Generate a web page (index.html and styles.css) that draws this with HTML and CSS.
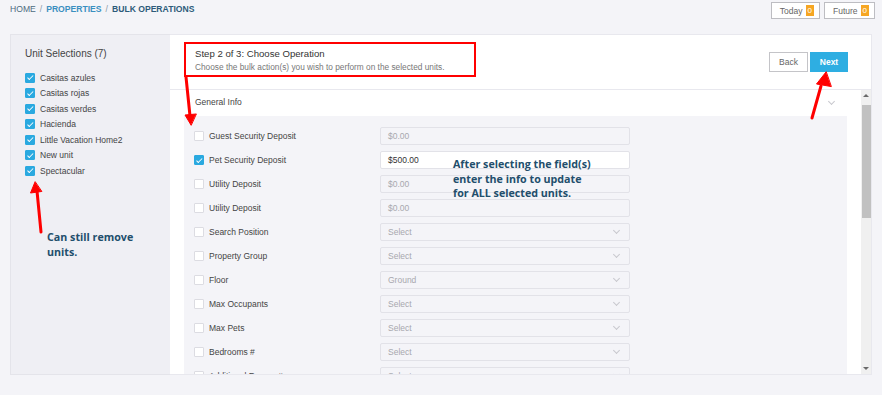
FILE: index.html
```html
<!DOCTYPE html>
<html lang="en">
<head>
    <meta charset="UTF-8">
    <meta name="viewport" content="width=device-width, initial-scale=1.0">
    <title>Bulk Operations</title>
    <link rel="stylesheet" href="styles.css">
</head>
<body>
<div class="page">
    <div class="topbar">
        <div class="crumbs">
            <span class="home">HOME</span>
            <span class="sep">/</span>
            <span class="link">PROPERTIES</span>
            <span class="sep">/</span>
            <span class="current">BULK OPERATIONS</span>
        </div>
        <div class="counters">
            <button class="counter">Today <span class="badge">0</span></button>
            <button class="counter">Future <span class="badge">0</span></button>
        </div>
    </div>

    <div class="layout">
        <aside class="units">
            <h3>Unit Selections (7)</h3>
            <ul>
                <li><span class="cb on"></span>Casitas azules</li>
                <li><span class="cb on"></span>Casitas rojas</li>
                <li><span class="cb on"></span>Casitas verdes</li>
                <li><span class="cb on"></span>Hacienda</li>
                <li><span class="cb on"></span>Little Vacation Home2</li>
                <li><span class="cb on"></span>New unit</li>
                <li><span class="cb on"></span>Spectacular</li>
            </ul>
        </aside>

        <section class="main">
            <div class="main-head">
                <div class="step">
                    <h2>Step 2 of 3: Choose Operation</h2>
                    <p>Choose the bulk action(s) you wish to perform on the selected units.</p>
                </div>
                <div class="actions">
                    <button class="btn">Back</button>
                    <button class="btn primary">Next</button>
                </div>
            </div>

            <div class="body-wrap">
                <div class="scroll">
                    <div class="section">
                        <div class="section-head">
                            <span>General Info</span>
                            <span class="caret"></span>
                        </div>
                        <div class="fields">
                            <div class="row"><span class="cb"></span><label>Guest Security Deposit</label><div class="input">$0.00</div></div>
                            <div class="row"><span class="cb on"></span><label>Pet Security Deposit</label><div class="input active">$500.00</div></div>
                            <div class="row"><span class="cb"></span><label>Utility Deposit</label><div class="input">$0.00</div></div>
                            <div class="row"><span class="cb"></span><label>Utility Deposit</label><div class="input">$0.00</div></div>
                            <div class="row"><span class="cb"></span><label>Search Position</label><div class="input">Select<span class="caret"></span></div></div>
                            <div class="row"><span class="cb"></span><label>Property Group</label><div class="input">Select<span class="caret"></span></div></div>
                            <div class="row"><span class="cb"></span><label>Floor</label><div class="input">Ground<span class="caret"></span></div></div>
                            <div class="row"><span class="cb"></span><label>Max Occupants</label><div class="input">Select<span class="caret"></span></div></div>
                            <div class="row"><span class="cb"></span><label>Max Pets</label><div class="input">Select<span class="caret"></span></div></div>
                            <div class="row"><span class="cb"></span><label>Bedrooms #</label><div class="input">Select<span class="caret"></span></div></div>
                            <div class="row"><span class="cb"></span><label>Additional Rooms #</label><div class="input">Select<span class="caret"></span></div></div>
                        </div>
                    </div>
                </div>
                <div class="scrollbar">
                    <span class="sb-btn up"></span>
                    <div class="sb-track"><div class="sb-thumb"></div></div>
                    <span class="sb-btn down"></span>
                </div>
            </div>
        </section>
    </div>

    <!-- tutorial annotations drawn over the screen -->
    <svg class="arrows" width="882" height="395" viewBox="0 0 882 395">
        <g stroke="#f00" stroke-width="3" stroke-linecap="round" fill="#f00">
            <line x1="41" y1="232" x2="37" y2="191"/>
            <polygon points="35,182 30.5,193 41.5,191.5" stroke-width="1"/>
            <line x1="186" y1="77" x2="190" y2="116"/>
            <polygon points="191,125 185,115 196,114" stroke-width="1"/>
            <line x1="812" y1="118" x2="821" y2="86"/>
            <polygon points="826,72 816.5,84 831,86.5" stroke-width="1"/>
        </g>
    </svg>
    <div class="note note-units">Can still remove<br>units.</div>
    <div class="note note-fields">After selecting the field(s)<br>enter the info to update<br>for ALL selected units.</div>
</div>
</body>
</html>
```

FILE: styles.css
```css
body {
    margin: 0;
    background: #f4f4f8;
    font-family: "Liberation Sans", Arial, sans-serif;
    color: #444;
}
.page {
    position: relative;
    width: 882px;
    height: 395px;
    overflow: hidden;
}
.topbar {
    height: 34px;
    display: flex;
    justify-content: space-between;
    align-items: flex-start;
    padding: 0 7px 0 10px;
    box-sizing: border-box;
}
.crumbs {
    margin-top: 4px;
    font-size: 8.6px;
    display: flex;
    gap: 4px;
}
.crumbs .home { color: #4d6b80; }
.crumbs .sep { color: #8a9aa6; }
.crumbs .link { color: #3a8fc0; font-weight: bold; }
.crumbs .current { color: #2d5b7a; font-weight: bold; }
.counters {
    display: flex;
    gap: 4px;
    margin-top: 2px;
}
.counter {
    height: 17px;
    padding: 0 5px 0 8px;
    border: 1px solid #bdbdc2;
    background: #fff;
    font-family: inherit;
    font-size: 8.5px;
    color: #666;
    display: flex;
    align-items: center;
    gap: 3px;
}
.badge {
    background: #f6a623;
    color: #fff;
    padding: 1px 2px;
    font-size: 8px;
    line-height: 9px;
}

.layout {
    height: 341px;
    margin: 0 10px;
    display: flex;
}
.units {
    width: 160px;
    box-sizing: border-box;
    background: #efeff4;
    border: 1px solid #e4e4ea;
    border-right: none;
    padding: 13px 14px;
}
.units h3 {
    margin: 0 0 11px;
    font-size: 10px;
    font-weight: normal;
    color: #444;
}
.units ul {
    list-style: none;
    margin: 0;
    padding: 0;
}
.units li {
    height: 15.5px;
    display: flex;
    align-items: center;
    gap: 5px;
    font-size: 8.5px;
}

.cb {
    position: relative;
    width: 10px;
    height: 10px;
    box-sizing: border-box;
    flex-shrink: 0;
    background: #fff;
    border: 1px solid #dcdce2;
    border-radius: 1px;
}
.cb.on {
    background: #2aa9e0;
    border-color: #2aa9e0;
}
.cb.on::after {
    content: "";
    position: absolute;
    left: 2.5px;
    top: 0.5px;
    width: 2px;
    height: 4.5px;
    border: solid #fff;
    border-width: 0 1.3px 1.3px 0;
    transform: rotate(45deg);
}

.main {
    flex: 1;
    background: #fff;
    border: 1px solid #e8e8ee;
    border-left: none;
    display: flex;
    flex-direction: column;
    min-width: 0;
}
.main-head {
    height: 55px;
    flex-shrink: 0;
    box-sizing: border-box;
    border-bottom: 1px solid #e8e8ee;
    display: flex;
    justify-content: space-between;
    align-items: flex-start;
    padding: 7px 23px 0 14px;
}
.step {
    width: 292px;
    height: 35px;
    box-sizing: border-box;
    border: 2px solid #f00;
    padding: 4px 9px 0;
}
.step h2 {
    margin: 0;
    font-size: 9.6px;
    font-weight: normal;
    color: #333;
}
.step p {
    margin: 3px 0 0;
    font-size: 8.3px;
    color: #777;
}
.actions {
    display: flex;
    gap: 2px;
    margin-top: 10px;
}
.btn {
    height: 20px;
    width: 39px;
    padding: 0;
    border: 1px solid #c4c4c8;
    background: #fff;
    font-family: inherit;
    font-size: 8.5px;
    color: #666;
}
.btn.primary {
    width: 38px;
    background: #2eaee2;
    border-color: #2eaee2;
    color: #fff;
    font-weight: bold;
}

.body-wrap {
    flex: 1;
    min-height: 0;
    display: flex;
}
.scroll {
    flex: 1;
    overflow: hidden;
}
.scrollbar {
    width: 10px;
    background: #f0f0f0;
    display: flex;
    flex-direction: column;
    align-items: center;
}
.sb-btn {
    height: 13px;
    width: 0;
    border-left: 3px solid transparent;
    border-right: 3px solid transparent;
    box-sizing: border-box;
}
.sb-btn.up {
    height: 3px;
    margin: 4px 0 6px;
    border-bottom: 3px solid #6a6a6a;
}
.sb-btn.down {
    height: 3px;
    margin: 6px 0 4px;
    border-top: 3px solid #6a6a6a;
}
.sb-track {
    flex: 1;
    align-self: stretch;
    padding: 2px 0 0 1px;
}
.sb-thumb {
    height: 113px;
    background: #c1c1c1;
}

.section {
    margin: 0 14px;
}
.section-head {
    height: 26px;
    display: flex;
    justify-content: space-between;
    align-items: center;
    padding: 0 13px 0 11px;
    font-size: 8.5px;
    color: #444;
}
.section-head span:first-child {
    margin-top: -3px;
}
.caret {
    width: 4px;
    height: 4px;
    border: solid #c8c8ce;
    border-width: 0 1px 1px 0;
    transform: rotate(45deg);
    margin-top: -3px;
}
.fields {
    background: #f4f4f8;
    padding: 8px 10px 0;
    min-height: 640px;
}
.row {
    height: 24px;
    display: flex;
    align-items: center;
}
.row label {
    width: 171px;
    margin-left: 5px;
    font-size: 8.5px;
    color: #444;
}
.input {
    width: 250px;
    height: 18px;
    box-sizing: border-box;
    background: #f4f4f8;
    border: 1px solid #e2e2e8;
    border-radius: 2px;
    padding: 0 10px 0 7px;
    display: flex;
    justify-content: space-between;
    align-items: center;
    font-size: 8.5px;
    color: #a8a8ae;
}
.input.active {
    background: #fff;
    color: #333;
}

.arrows {
    position: absolute;
    left: 0;
    top: 0;
    pointer-events: none;
}
.note {
    position: absolute;
    font-family: "Open Sans", sans-serif;
    font-weight: bold;
    font-size: 10.7px;
    line-height: 14.5px;
    color: #224e6c;
}
.note-units {
    left: 47px;
    top: 230px;
}
.note-fields {
    left: 453px;
    top: 157px;
}
```
